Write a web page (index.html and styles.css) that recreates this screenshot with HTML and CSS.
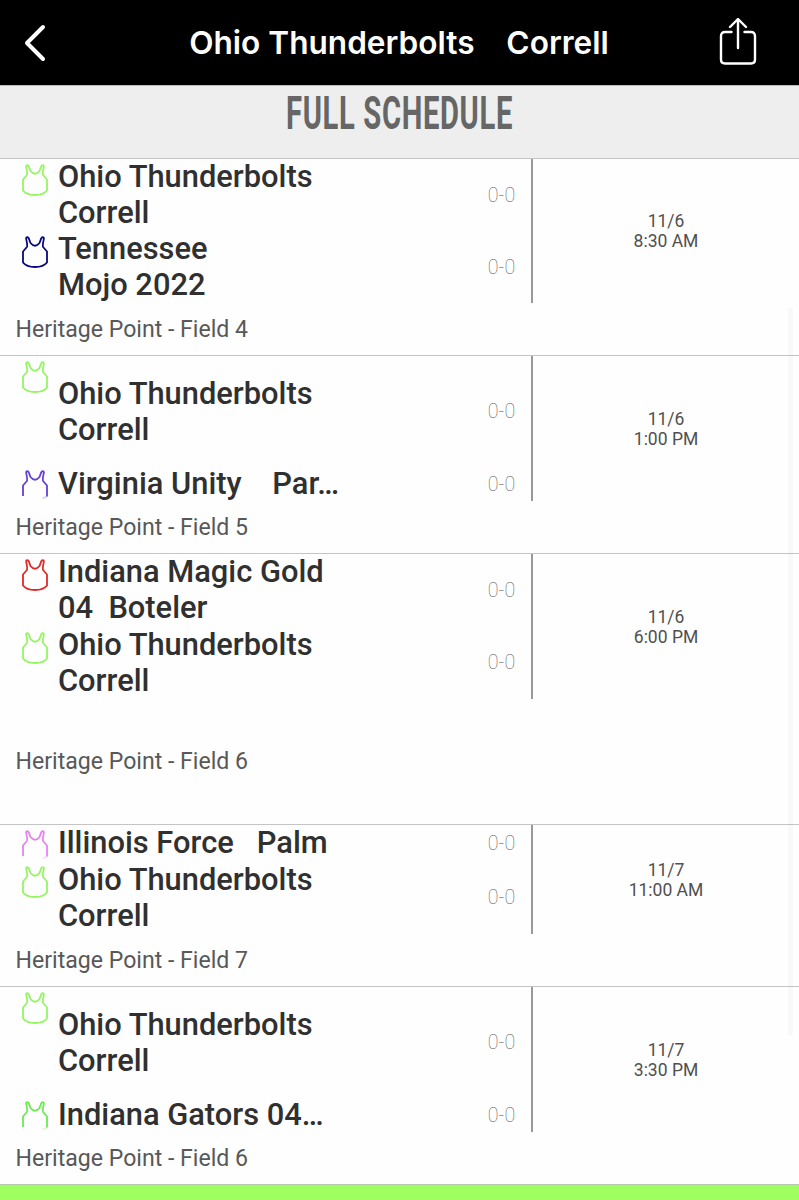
FILE: index.html
```html
<!DOCTYPE html>
<html lang="en">
<head>
    <meta charset="UTF-8">
    <meta name="viewport" content="width=device-width, initial-scale=1.0">
    <title>Full Schedule</title>
    <link rel="stylesheet" href="styles.css">
</head>
<body>
    <!-- Jersey outlines, the short one is cut off at the bottom -->
    <svg class="defs" width="0" height="0">
        <symbol id="jersey" viewBox="0 0 26 33">
            <path d="M4.1 2.6C4.1 .9 6.2 .8 6.8 2.4L8.500 7Q13 12.500 17.500 7L19.2 2.4C19.8 .8 21.9 .9 21.9 2.6Q20.3 9.5 21.1 11L25 15.5V26.500Q21.5 31 13 31T1 26.500V15.5L4.9 11Q5.7 9.5 4.1 2.6Z"/>
        </symbol>
        <symbol id="jersey-short" viewBox="0 0 26 33">
            <path d="M1 26V15.5L4.9 11Q5.7 9.5 4.1 2.6C4.1 .9 6.2 .8 6.8 2.4L8.500 7Q13 12.500 17.500 7L19.2 2.4C19.8 .8 21.9 .9 21.9 2.6Q20.3 9.5 21.1 11L25 15.5V26.500"/>
            <path class="faded" d="M25 26.500L20.5 28.5"/>
        </symbol>
    </svg>

    <header class="navbar">
        <svg class="back" viewBox="0 0 24 40"><path d="M21 4L5 20l16 16"/></svg>
        <h1>Ohio Thunderbolts    Correll</h1>
        <svg class="share" viewBox="0 0 40 50">
            <path d="M13.5 14H7q-4 0-4 4V41.500q0 4 4 4h26q4 0 4-4V18q0-4-4-4h-6.500"/>
            <path d="M20 30V1.500M12 9l8-8 8 8"/>
        </svg>
    </header>

    <div class="title"><h2>FULL SCHEDULE</h2></div>

    <main class="schedule">
        <section class="game">
            <div class="matchup">
                <div class="teams">
                    <div class="team">
                        <svg class="jersey lime"><use href="#jersey"/></svg>
                        <div class="name">Ohio Thunderbolts
Correll</div>
                        <div class="score">0-0</div>
                    </div>
                    <div class="team">
                        <svg class="jersey navy"><use href="#jersey"/></svg>
                        <div class="name">Tennessee
Mojo 2022</div>
                        <div class="score">0-0</div>
                    </div>
                </div>
                <div class="time">11/6<br>8:30 AM</div>
            </div>
            <div class="location">Heritage Point - Field 4</div>
        </section>

        <section class="game">
            <div class="matchup">
                <div class="teams">
                    <div class="team">
                        <svg class="jersey lime"><use href="#jersey"/></svg>
                        <div class="name">Ohio Thunderbolts
Correll</div>
                        <div class="score">0-0</div>
                    </div>
                    <div class="team single">
                        <svg class="jersey purple"><use href="#jersey-short"/></svg>
                        <div class="name">Virginia Unity    Par…</div>
                        <div class="score">0-0</div>
                    </div>
                </div>
                <div class="time">11/6<br>1:00 PM</div>
            </div>
            <div class="location">Heritage Point - Field 5</div>
        </section>

        <section class="game tall">
            <div class="matchup">
                <div class="teams">
                    <div class="team">
                        <svg class="jersey red"><use href="#jersey"/></svg>
                        <div class="name">Indiana Magic Gold
04  Boteler</div>
                        <div class="score">0-0</div>
                    </div>
                    <div class="team">
                        <svg class="jersey lime"><use href="#jersey"/></svg>
                        <div class="name">Ohio Thunderbolts
Correll</div>
                        <div class="score">0-0</div>
                    </div>
                </div>
                <div class="time">11/6<br>6:00 PM</div>
            </div>
            <div class="location">Heritage Point - Field 6</div>
        </section>

        <section class="game compact">
            <div class="matchup">
                <div class="teams">
                    <div class="team single">
                        <svg class="jersey pink"><use href="#jersey-short"/></svg>
                        <div class="name">Illinois Force   Palm</div>
                        <div class="score">0-0</div>
                    </div>
                    <div class="team">
                        <svg class="jersey lime"><use href="#jersey"/></svg>
                        <div class="name">Ohio Thunderbolts
Correll</div>
                        <div class="score">0-0</div>
                    </div>
                </div>
                <div class="time">11/7<br>11:00 AM</div>
            </div>
            <div class="location">Heritage Point - Field 7</div>
        </section>

        <section class="game">
            <div class="matchup">
                <div class="teams">
                    <div class="team">
                        <svg class="jersey lime"><use href="#jersey"/></svg>
                        <div class="name">Ohio Thunderbolts
Correll</div>
                        <div class="score">0-0</div>
                    </div>
                    <div class="team single">
                        <svg class="jersey green"><use href="#jersey-short"/></svg>
                        <div class="name">Indiana Gators 04…</div>
                        <div class="score">0-0</div>
                    </div>
                </div>
                <div class="time">11/7<br>3:30 PM</div>
            </div>
            <div class="location">Heritage Point - Field 6</div>
        </section>
    </main>

    <div class="footer-bar"></div>
    <div class="scrollbar"></div>
</body>
</html>
```
FILE: styles.css
```css
* {
    box-sizing: border-box;
}
body {
    margin: 0;
    height: 1200px;
    overflow: hidden;
    position: relative;
    display: flex;
    flex-direction: column;
    background-color: #fefefe;
    font-family: Roboto, sans-serif;
    color: #303030;
}
.defs {
    display: block;
    flex: none;
}
.navbar {
    height: 85px;
    padding: 0 41px 0 22px;
    display: grid;
    grid-template-columns: 82px 1fr 24px 40px;
    align-items: center;
    background-color: #000;
    color: #fff;
}
.navbar h1 {
    margin: 0;
    font-family: Inter, sans-serif;
    font-size: 31.6px;
    font-weight: 600;
    text-align: center;
    white-space: pre;
}
.navbar svg {
    fill: none;
    stroke: #fff;
    stroke-linecap: round;
    stroke-linejoin: round;
}
.back {
    width: 24px;
    height: 40px;
    stroke-width: 4;
}
.share {
    grid-column: 4;
    width: 40px;
    height: 50px;
    stroke-width: 2.4;
}
.title {
    height: 73px;
    background-color: #eee;
    border-top: 1px solid #bbb;
    text-align: center;
}
.title h2 {
    margin: 0;
    font-size: 46px;
    line-height: 55px;
    font-weight: 700;
    letter-spacing: 1px;
    color: #666;
    transform: scaleX(0.635);
}
.game {
    height: 198px;
    display: flex;
    flex-direction: column;
    border-top: 1px solid #c4c4c4;
}
.game:first-child {
    height: 197px;
}
.game.tall {
    height: 271px;
}
.game.compact {
    height: 162px;
}
.matchup {
    height: 145px;
    flex: none;
    display: flex;
}
.game:first-child .matchup {
    height: 144px;
}
.compact .matchup {
    height: 109px;
}
.teams {
    width: 533px;
    display: flex;
    flex-direction: column;
    border-right: 2px solid #999;
}
.team {
    flex: 1 1 72px;
    display: flex;
    padding-left: 22.4px;
}
.team.single {
    flex: 0 0 34px;
    min-height: 0;
}
.compact .team.single {
    flex: 0 0 36px;
}
.jersey {
    width: 26px;
    height: 33px;
    margin-top: 5px;
    flex: none;
    fill: none;
    stroke-width: 1.8;
    stroke-linejoin: round;
}
.single .jersey {
    margin-top: 3px;
}
.compact .single .jersey {
    margin-top: 5px;
}
.faded {
    opacity: 0.25;
}
.lime {
    stroke: #96f562;
}
.navy {
    stroke: #08087c;
}
.purple {
    stroke: #6540d8;
}
.red {
    stroke: #e02b25;
}
.pink {
    stroke: #e683ef;
}
.green {
    stroke: #6bea52;
}
.name {
    flex: 1;
    align-self: center;
    padding-left: 9.6px;
    font-size: 30.85px;
    line-height: 36px;
    font-weight: 500;
    white-space: pre;
}
.score {
    width: 59px;
    align-self: center;
    text-align: center;
    font-size: 19.6px;
    font-weight: 100;
    color: #555;
}
.time {
    flex: 1;
    align-self: center;
    text-align: center;
    font-size: 17.5px;
    line-height: 20px;
    color: #505050;
}
.location {
    flex: 1;
    display: flex;
    align-items: center;
    padding-left: 15.5px;
    font-size: 23.1px;
    color: #585858;
}
.footer-bar {
    flex: 1;
    background-color: #9fff60;
    border-top: 1px solid #b8c8b0;
}
.scrollbar {
    position: absolute;
    top: 307px;
    right: 6px;
    width: 5px;
    height: 729px;
    border-radius: 3px;
    background-color: rgba(0, 0, 0, 0.02);
}
```
